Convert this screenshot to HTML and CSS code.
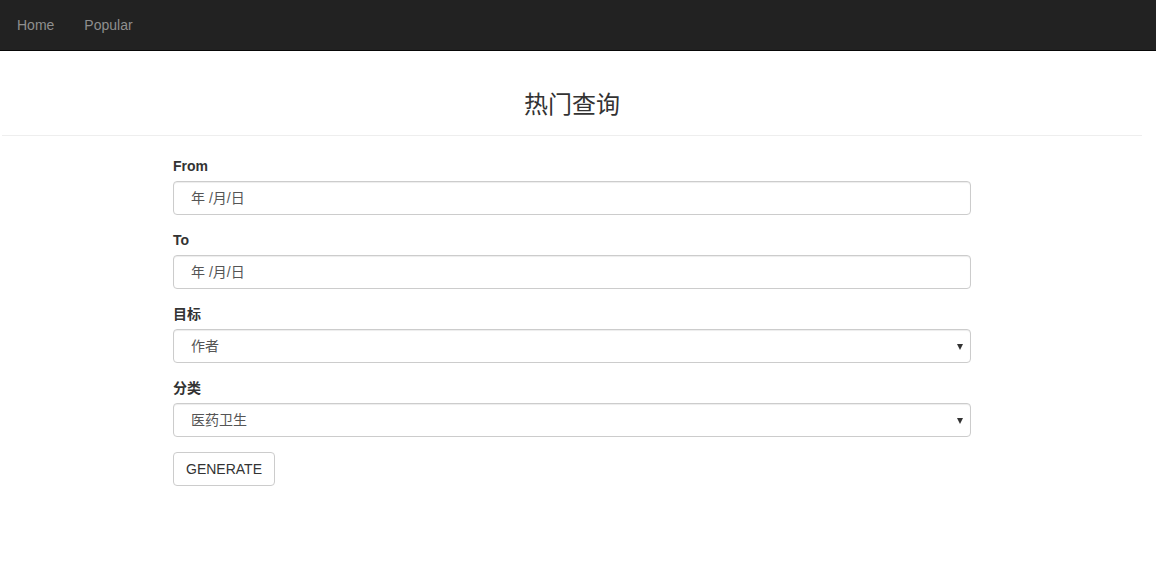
FILE: index.html
```html
<!DOCTYPE html>
<html lang="zh">
<head>
<meta charset="utf-8">
<title>热门查询</title>
<link rel="stylesheet" href="styles.css">
</head>
<body>
<nav class="navbar">
  <ul class="nav-links">
    <li><a href="#" class="nav-link">Home</a></li>
    <li><a href="#" class="nav-link">Popular</a></li>
  </ul>
</nav>
<div class="page">
  <div class="page-header">
    <h3 class="title">热门查询</h3>
  </div>
  <form class="form">
    <div class="form-group">
      <label class="label">From</label>
      <div class="control">年 /月/日</div>
    </div>
    <div class="form-group">
      <label class="label">To</label>
      <div class="control">年 /月/日</div>
    </div>
    <div class="form-group">
      <label class="label">目标</label>
      <div class="control select">作者<span class="caret"></span></div>
    </div>
    <div class="form-group">
      <label class="label">分类</label>
      <div class="control select">医药卫生<span class="caret"></span></div>
    </div>
    <button type="button" class="btn">GENERATE</button>
  </form>
</div>
</body>
</html>
```
FILE: styles.css
```css
* { box-sizing: border-box; }
html, body { margin: 0; padding: 0; }
body {
  font-family: "Liberation Sans", Arial, "Noto Sans CJK SC", sans-serif;
  font-size: 14px;
  line-height: 20px;
  color: #333;
  background: #fff;
}
.navbar {
  height: 51px;
  background: #222;
  border-bottom: 1px solid #080808;
  padding-left: 2px;
}
.nav-links {
  list-style: none;
  margin: 0;
  padding: 0;
  display: flex;
}
.nav-link {
  display: block;
  padding: 15px;
  color: #8f8f8f;
  text-decoration: none;
  line-height: 20px;
}
.page {
  margin-left: 2px;
  width: 1140px;
}
.page-header {
  padding-top: 39px;
  padding-bottom: 19px;
  border-bottom: 1px solid #eee;
  text-align: center;
}
.title {
  margin: 0;
  font-size: 24px;
  line-height: 26px;
  font-weight: 400;
  font-family: "Noto Sans CJK SC", sans-serif;
  color: #333;
}
.form {
  margin: 20px 0 0 171px;
  width: 798px;
}
.form-group {
  margin-bottom: 15px;
}
.label {
  display: block;
  font-weight: 700;
  margin-bottom: 5px;
  font-family: "Liberation Sans", Arial, "Noto Sans CJK SC", sans-serif;
}
.control {
  position: relative;
  height: 34px;
  padding: 6px 17px;
  border: 1px solid #ccc;
  border-radius: 4px;
  box-shadow: inset 0 1px 1px rgba(0,0,0,.075);
  color: #555;
  font-family: "Liberation Sans", Arial, "Noto Sans CJK SC", sans-serif;
}
.caret {
  position: absolute;
  right: 7px;
  top: 14px;
  width: 0;
  height: 0;
  border-left: 3.5px solid transparent;
  border-right: 3.5px solid transparent;
  border-top: 6px solid #333;
}
.btn {
  display: block;
  height: 34px;
  padding: 6px 12px;
  font-family: "Liberation Sans", Arial, sans-serif;
  font-size: 14px;
  line-height: 20px;
  color: #333;
  background: #fff;
  border: 1px solid #ccc;
  border-radius: 4px;
  margin: 0;
}
```
